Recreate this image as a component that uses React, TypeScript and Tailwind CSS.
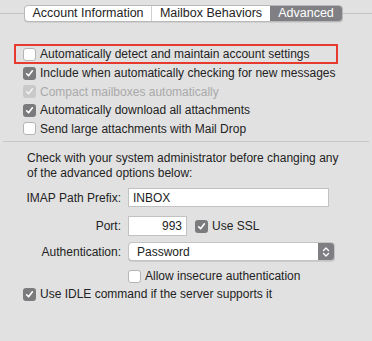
import React from "react";

function Box({ checked, disabled }: { checked?: boolean; disabled?: boolean }) {
  if (checked) {
    return (
      <span
        className={
          "w-[13px] h-[13px] rounded-[3px] flex items-center justify-center shrink-0 " +
          (disabled ? "bg-[#c9c9c9]" : "bg-[#7b7b7d]")
        }
      >
        <svg width="9" height="9" viewBox="0 0 9 9">
          <path
            d="M1.6 4.8 L3.6 6.8 L7.4 1.8"
            fill="none"
            stroke={disabled ? "#f2f2f2" : "#ffffff"}
            strokeWidth="1.6"
            strokeLinecap="round"
            strokeLinejoin="round"
          />
        </svg>
      </span>
    );
  }
  return (
    <span className="w-[13px] h-[13px] rounded-[3px] bg-white border border-[#b4b4b4] shrink-0" />
  );
}

function Check({
  label,
  checked,
  disabled,
}: {
  label: string;
  checked?: boolean;
  disabled?: boolean;
}) {
  return (
    <div className="flex items-center gap-[4px] h-[18.5px] whitespace-nowrap">
      <Box checked={checked} disabled={disabled} />
      <span className={disabled ? "text-[#a9a9a9]" : "text-[#232323]"}>{label}</span>
    </div>
  );
}

export default function App() {
  return (
    <div
      className="w-[372px] h-[341px] bg-[#e1e1e1] text-[12px] text-[#232323] overflow-hidden"
      style={{ fontFamily: '"Liberation Sans", Arial, sans-serif' }}
    >
      {/* Tabs */}
      <div className="relative h-[27px] pt-[5px]">
        <div className="absolute left-0 right-0 top-[13px] h-px bg-[#c4c4c4]" />
        <div className="relative ml-[24px] w-[319px] h-[17px] flex rounded-[4px] border border-[#b9b9b9] bg-white overflow-hidden shadow-[0_0.5px_0.5px_rgba(0,0,0,0.15)] text-[12.5px]">
          <div className="w-[127px] flex items-center justify-center border-r border-[#cfcfcf] leading-none">
            Account Information
          </div>
          <div className="w-[118px] flex items-center justify-center leading-none">
            Mailbox Behaviors
          </div>
          <div className="flex-1 flex items-center justify-center bg-[#808084] text-white leading-none">
            Advanced
          </div>
        </div>
      </div>

      {/* Checkboxes */}
      <div className="mt-[17px] px-[14px]">
        <div className="border-2 border-[#e8392f] w-[324px] h-[20px] flex items-center pl-[7px]">
          <div className="flex items-center gap-[4px] whitespace-nowrap">
            <Box />
            <span>Automatically detect and maintain account settings</span>
          </div>
        </div>
        <div className="pl-[9px]">
          <Check label="Include when automatically checking for new messages" checked />
          <Check label="Compact mailboxes automatically" checked disabled />
          <Check label="Automatically download all attachments" checked />
          <Check label="Send large attachments with Mail Drop" />
        </div>
      </div>

      <div className="mx-[3px] mt-[3px] h-px bg-[#c8c8c8]" />

      {/* Advanced */}
      <div className="pl-[27px] pt-[9px] leading-[15px]">
        <p>Check with your system administrator before changing any</p>
        <p>of the advanced options below:</p>
      </div>

      <div className="mt-[7px] grid grid-cols-[128px_auto] items-center">
        <div className="text-right pr-[7px]">IMAP Path Prefix:</div>
        <div className="w-[201px] h-[19px] bg-white border border-[#c2c2c2] flex items-center pl-[4px]">
          INBOX
        </div>

        <div className="text-right pr-[7px] mt-[9px]">Port:</div>
        <div className="flex items-center gap-[8px] mt-[9px]">
          <div className="w-[59px] h-[20px] bg-white border border-[#c2c2c2] flex items-center justify-end pr-[4px]">
            993
          </div>
          <div className="flex items-center gap-[4px]">
            <Box checked />
            <span>Use SSL</span>
          </div>
        </div>

        <div className="text-right pr-[7px] mt-[6px]">Authentication:</div>
        <div className="mt-[6px] w-[207px] h-[19px] bg-white rounded-[4px] border border-[#c4c4c4] shadow-[0_0.5px_0.5px_rgba(0,0,0,0.2)] flex items-center overflow-hidden">
          <span className="flex-1 pl-[8px]">Password</span>
          <div className="w-[16px] h-full bg-[#7f7f83] flex items-center justify-center">
            <svg width="8" height="12" viewBox="0 0 8 12">
              <path d="M1.5 4.5 L4 2 L6.5 4.5 M1.5 7.5 L4 10 L6.5 7.5" fill="none" stroke="#fff" strokeWidth="1.3" strokeLinecap="round" strokeLinejoin="round" />
            </svg>
          </div>
        </div>

        <div />
        <div className="flex items-center gap-[4px] mt-[6px] whitespace-nowrap">
          <Box />
          <span>Allow insecure authentication</span>
        </div>
      </div>

      <div className="pl-[23px] mt-0">
        <Check label="Use IDLE command if the server supports it" checked />
      </div>
    </div>
  );
}
